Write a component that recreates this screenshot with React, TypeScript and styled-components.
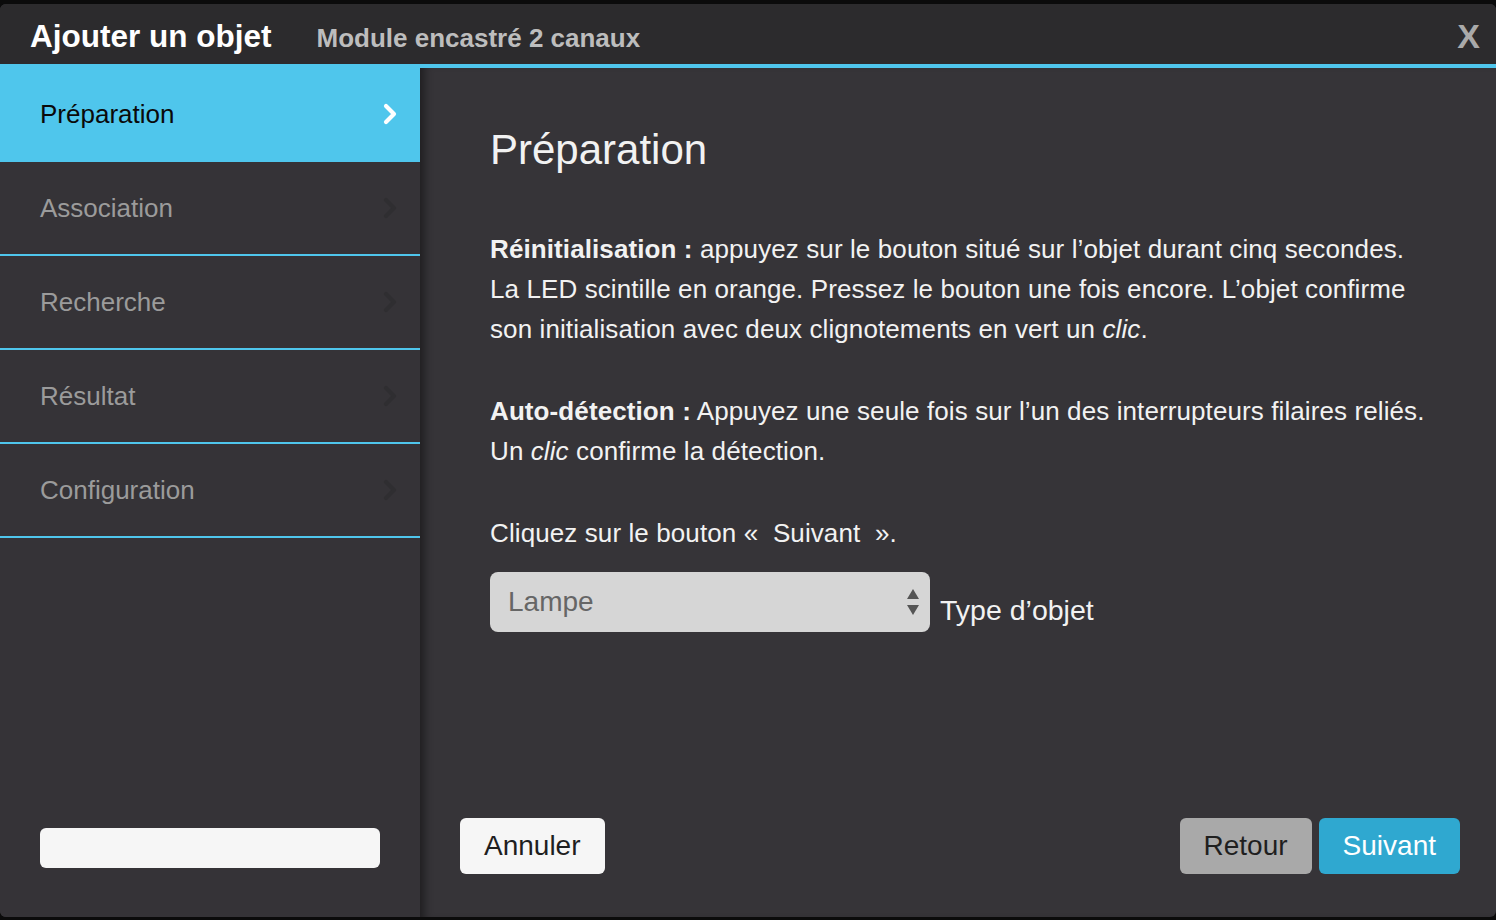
import React from "react";
import styled, { createGlobalStyle } from "styled-components";

const Global = createGlobalStyle`
  html, body { margin: 0; padding: 0; background: #0b0b0b; }
  body { font-family: "Liberation Sans", Arial, Helvetica, sans-serif; }
  * { box-sizing: border-box; }
`;

const Dialog = styled.div`
  margin-top: 4px;
  height: 913px;
  width: 1496px;
  border-radius: 6px;
  overflow: hidden;
  display: flex;
  flex-direction: column;
  background: #363438;
`;

const Header = styled.header`
  height: 64px;
  flex: none;
  background: #2c2b2d;
  border-bottom: 4px solid #4fc6ec;
  display: flex;
  align-items: center;
  padding: 4px 14px 0 30px;
`;

const Title = styled.h1`
  margin: 0;
  font-size: 31.5px;
  font-weight: 700;
  color: #ffffff;
`;

const Subtitle = styled.h2`
  margin: 0 0 0 45px;
  font-size: 26px;
  font-weight: 700;
  color: #bdbdbd;
  padding-top: 4px;
`;

const Close = styled.button`
  margin-left: auto;
  border: none;
  background: none;
  padding: 0;
  font-family: "Liberation Sans", Arial, sans-serif;
  font-size: 34px;
  font-weight: 700;
  color: #a9a9a9;
  line-height: 1;
  margin-right: 2px;
  cursor: pointer;
`;

const Body = styled.div`
  flex: 1;
  display: flex;
  min-height: 0;
`;

const Sidebar = styled.nav`
  width: 420px;
  flex: none;
  background: #353337;
  display: flex;
  flex-direction: column;
`;

const StepItem = styled.div<{ $active?: boolean }>`
  height: 94px;
  display: flex;
  align-items: center;
  justify-content: space-between;
  padding: 0 22px 0 40px;
  font-size: 26px;
  border-bottom: 2px solid #4fc6ec;
  background: ${(p) => (p.$active ? "#4fc6ec" : "transparent")};
  color: ${(p) => (p.$active ? "#0a0a0a" : "#9b9b9b")};
`;

const SidebarFooter = styled.div`
  margin-top: auto;
  padding: 0 40px 49px 40px;
`;

const SearchBox = styled.div`
  height: 40px;
  width: 340px;
  background: #f6f6f6;
  border-radius: 6px;
`;

const Main = styled.main`
  flex: 1;
  display: flex;
  flex-direction: column;
  box-shadow: inset 10px 0 10px -6px rgba(0, 0, 0, 0.45);
`;

const Content = styled.section`
  padding: 57px 40px 0 70px;
  color: #f2f2f2;
`;

const Heading = styled.h2`
  margin: 0 0 54px;
  font-size: 42px;
  font-weight: 400;
  line-height: 50px;
  color: #f2f2f2;
`;

const Para = styled.p`
  margin: 0 0 42px;
  font-size: 26px;
  line-height: 40px;
  letter-spacing: 0.1px;
  white-space: nowrap;
`;

const Row = styled.div`
  display: flex;
  align-items: center;
  margin-top: -23px;
`;

const SelectBox = styled.div`
  width: 440px;
  height: 60px;
  background: #d6d6d6;
  border-radius: 8px;
  display: flex;
  align-items: center;
  justify-content: space-between;
  padding: 0 10px 0 18px;
  font-size: 28px;
  color: #666666;
`;

const FieldLabel = styled.label`
  margin: 16px 0 0 10px;
  font-size: 28.5px;
  color: #f2f2f2;
`;

const Footer = styled.footer`
  margin-top: auto;
  display: flex;
  align-items: center;
  gap: 7px;
  padding: 0 36px 43px 40px;
`;

const Button = styled.button<{ $variant: "light" | "gray" | "primary" }>`
  height: 56px;
  border: none;
  border-radius: 6px;
  padding: 0 24px;
  font-family: "Liberation Sans", Arial, sans-serif;
  font-size: 28px;
  cursor: pointer;
  background: ${(p) =>
    p.$variant === "light" ? "#f6f6f6" : p.$variant === "gray" ? "#a9a9a9" : "#2fa8d0"};
  color: ${(p) => (p.$variant === "primary" ? "#ffffff" : "#1f1f1f")};
`;

const Spacer = styled.div`
  flex: 1;
`;

const Chevron = ({ active }: { active?: boolean }) => (
  <svg width="16" height="22" viewBox="0 0 16 22">
    <polyline
      points="4,3 12,11 4,19"
      fill="none"
      stroke={active ? "#ffffff" : "#2f2e31"}
      strokeWidth="4.2"
      strokeLinecap="round"
      strokeLinejoin="round"
    />
  </svg>
);

const Arrows = () => (
  <svg width="14" height="30" viewBox="0 0 14 30">
    <polygon points="7,2 13,12 1,12" fill="#555" />
    <polygon points="7,28 13,18 1,18" fill="#555" />
  </svg>
);

const steps = ["Préparation", "Association", "Recherche", "Résultat", "Configuration"];

export default function App() {
  return (
    <>
      <Global />
      <Dialog>
        <Header>
          <Title>Ajouter un objet</Title>
          <Subtitle>Module encastré 2 canaux</Subtitle>
          <Close>X</Close>
        </Header>
        <Body>
          <Sidebar>
            {steps.map((s, i) => (
              <StepItem key={s} $active={i === 0}>
                <span>{s}</span>
                <Chevron active={i === 0} />
              </StepItem>
            ))}
            <SidebarFooter>
              <SearchBox />
            </SidebarFooter>
          </Sidebar>
          <Main>
            <Content>
              <Heading>Préparation</Heading>
              <Para>
                <b>Réinitialisation :</b> appuyez sur le bouton situé sur l’objet durant cinq secondes.
                <br />
                La LED scintille en orange. Pressez le bouton une fois encore. L’objet confirme
                <br />
                son initialisation avec deux clignotements en vert un <i>clic</i>.
              </Para>
              <Para>
                <b>Auto-détection :</b> Appuyez une seule fois sur l’un des interrupteurs filaires reliés.
                <br />
                Un <i>clic</i> confirme la détection.
              </Para>
              <Para>Cliquez sur le bouton «&nbsp; Suivant &nbsp;».</Para>
              <Row>
                <SelectBox>
                  <span>Lampe</span>
                  <Arrows />
                </SelectBox>
                <FieldLabel>Type d’objet</FieldLabel>
              </Row>
            </Content>
            <Footer>
              <Button $variant="light">Annuler</Button>
              <Spacer />
              <Button $variant="gray">Retour</Button>
              <Button $variant="primary">Suivant</Button>
            </Footer>
          </Main>
        </Body>
      </Dialog>
    </>
  );
}
